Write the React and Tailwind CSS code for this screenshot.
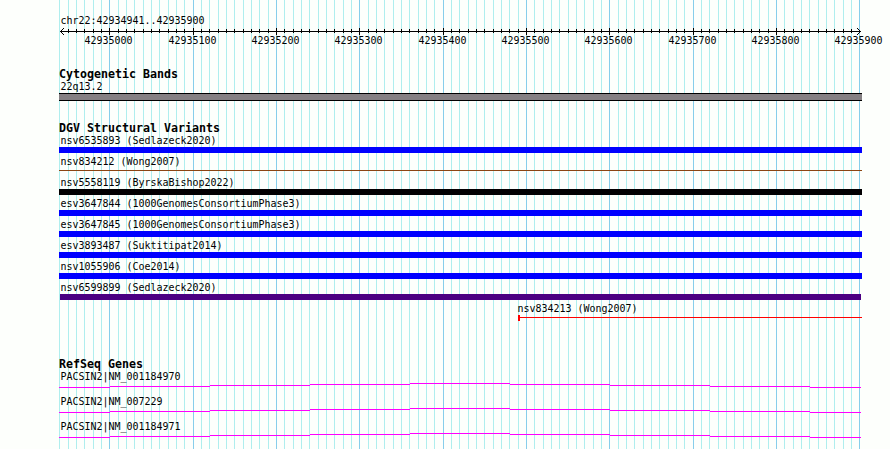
const grid = Array.from({ length: 97 }, (_, i) => ({
  x: Math.round(59.333 + i * 8.33333),
  major: i % 10 === 6,
}));

const majors = grid.filter((g) => g.major);

const variants = [
  { label: 'nsv6535893 (Sedlazeck2020)', bar: 'h-[6px] bg-[#0000ff]' },
  { label: 'nsv834212 (Wong2007)', bar: 'mt-[2px] h-px bg-[#8b4513]' },
  { label: 'nsv5558119 (ByrskaBishop2022)', bar: 'h-[6px] bg-[#020002]' },
  { label: 'esv3647844 (1000GenomesConsortiumPhase3)', bar: 'h-[6px] bg-[#0000ff]' },
  { label: 'esv3647845 (1000GenomesConsortiumPhase3)', bar: 'h-[6px] bg-[#0000ff]' },
  { label: 'esv3893487 (Suktitipat2014)', bar: 'h-[6px] bg-[#0000ff]' },
  { label: 'nsv1055906 (Coe2014)', bar: 'h-[6px] bg-[#0000ff]' },
  { label: 'nsv6599899 (Sedlazeck2020)', bar: 'ml-px mr-px h-[6px] bg-[#4b0082]' },
];

const genes = ['PACSIN2|NM_001184970', 'PACSIN2|NM_007229', 'PACSIN2|NM_001184971'];

function GridLines() {
  return (
    <svg className="absolute inset-0" width="890" height="449" shapeRendering="crispEdges" aria-hidden="true">
      {grid.map((g) => (
        <rect key={g.x} x={g.x} y="0" width="1" height="449" fill={g.major ? '#87ceeb' : '#afeeee'} />
      ))}
    </svg>
  );
}

function Ruler() {
  return (
    <svg className="block h-[9px] w-[803px]" viewBox="59 27 803 9" shapeRendering="crispEdges">
      <rect x="60" y="31" width="801" height="1" />
      {grid.slice(1, -1).map((g) => (
        <rect key={g.x} x={g.x} y={g.major ? 28 : 29} width="1" height={g.major ? 7 : 4} />
      ))}
      {[1, 2, 3].map((d) => (
        <g key={d}>
          <rect x={60 + d} y={31 - d} width="1" height="1" />
          <rect x={60 + d} y={31 + d} width="1" height="1" />
          <rect x={860 - d} y={31 - d} width="1" height="1" />
          <rect x={860 - d} y={31 + d} width="1" height="1" />
        </g>
      ))}
    </svg>
  );
}

function Label({ children }) {
  return (
    <div className="h-[12px] origin-[0_10px] scale-y-[1.08] pl-[1.5px] leading-[12px] whitespace-pre">{children}</div>
  );
}

function Heading({ children }) {
  return <h2 className="h-[13px] text-[11.63px] leading-[13px] font-bold whitespace-pre">{children}</h2>;
}

function Transcript() {
  return (
    <svg className="block h-[5px] w-[802px]" viewBox="59 383 802 5" shapeRendering="crispEdges" fill="#ff00ff">
      <rect x="59" y="387" width="51" height="1" />
      <rect x="110" y="386" width="100" height="1" />
      <rect x="210" y="385" width="100" height="1" />
      <rect x="310" y="384" width="100" height="1" />
      <rect x="410" y="383" width="100" height="1" />
      <rect x="510" y="384" width="100" height="1" />
      <rect x="610" y="385" width="100" height="1" />
      <rect x="710" y="386" width="100" height="1" />
      <rect x="810" y="387" width="51" height="1" />
    </svg>
  );
}

export default function App() {
  return (
    <div className="relative h-[449px] w-[890px] overflow-hidden bg-[#fdfffc] font-['DejaVu_Sans_Mono',monospace] text-[9.97px] text-black">
      <GridLines />
      <main className="relative ml-[59px] w-[803px] pt-[15px]">
        <Label>chr22:42934941..42935900</Label>
        <Ruler />
        <div className="-mt-px flex h-[12px] w-[831px] origin-[0_10px] scale-y-[1.08] pl-[25.5px] leading-[12px]">
          {majors.map((m, i) => (
            <span
              key={m.x}
              className="shrink-0"
              style={{ width: i < majors.length - 1 ? majors[i + 1].x - m.x : 49 }}
            >
              {42935000 + i * 100}
            </span>
          ))}
        </div>

        <section className="mt-[21px]">
          <Heading>Cytogenetic Bands</Heading>
          <Label>22q13.2</Label>
          <div className="h-[8px] border-y border-black bg-[#858083]" />
        </section>

        <section className="mt-[21px]">
          <Heading>DGV Structural Variants</Heading>
          {variants.map((v) => (
            <div key={v.label} className="h-[21px]">
              <Label>{v.label}</Label>
              <div className={v.bar} />
            </div>
          ))}
          <div className="ml-[457px] h-[21px]">
            <Label>nsv834213 (Wong2007)</Label>
            <div className="ml-[2px] flex h-[6px] items-start">
              <div className="h-[6px] w-[2px] bg-[#ff0000]" />
              <div className="mt-[2px] h-px grow bg-[#ff0000]" />
            </div>
          </div>
        </section>

        <section className="mt-[34px]">
          <Heading>RefSeq Genes</Heading>
          {genes.map((g) => (
            <div key={g} className="h-[25px]">
              <Label>{g}</Label>
              <Transcript />
            </div>
          ))}
        </section>
      </main>
    </div>
  );
}
